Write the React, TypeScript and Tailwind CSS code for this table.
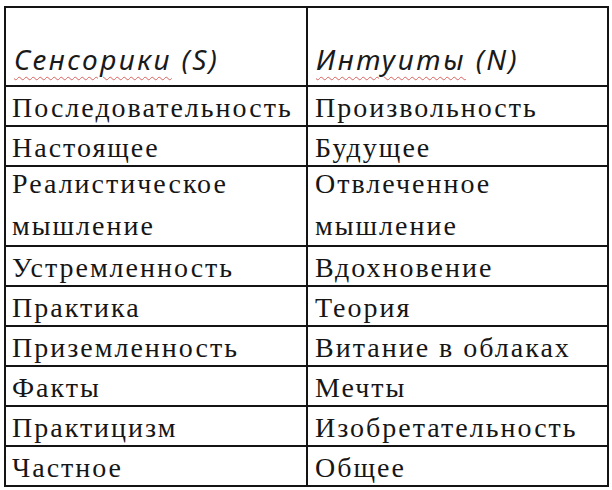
import React from "react";

const rows: [string, string][] = [
  ["Последовательность", "Произвольность"],
  ["Настоящее", "Будущее"],
  ["Реалистическое\nмышление", "Отвлеченное\nмышление"],
  ["Устремленность", "Вдохновение"],
  ["Практика", "Теория"],
  ["Приземленность", "Витание в облаках"],
  ["Факты", "Мечты"],
  ["Практицизм", "Изобретательность"],
  ["Частное", "Общее"],
];

function Cell({ text, left }: { text: string; left: boolean }) {
  const two = text.includes("\n");
  const lines = text.split("\n");
  if (two) {
    return (
      <div className={left ? "h-[80px] border-r-2 border-b-2 border-[#141414] pl-[6px]" : "h-[80px] border-r-2 border-b-2 border-[#141414] pl-[7px]"}>
        <div className="-mt-[4px] leading-[42px]">
          {lines.map((l, i) => (
            <div key={i} className="whitespace-nowrap">
              {l}
            </div>
          ))}
        </div>
      </div>
    );
  }
  return (
    <div className={left ? "h-[40px] border-r-2 border-b-2 border-[#141414] pt-[1px] pl-[6px] leading-[40px] whitespace-nowrap" : "h-[40px] border-r-2 border-b-2 border-[#141414] pt-[1px] pl-[7px] leading-[40px] whitespace-nowrap"}>
      {text}
    </div>
  );
}

function Head({ word, letter }: { word: string; letter: string }) {
  return (
    <div className="h-[79px] border-r-2 border-b-2 border-[#141414] pt-[35px] pl-[8px] font-['Noto_Sans'] text-[28px] italic leading-[32px] tracking-[2.5px] text-[#1a1a1a] whitespace-nowrap">
      <span className="underline decoration-wavy decoration-[#d9625e] decoration-1 underline-offset-[6px]">
        {word}
      </span>{" "}
      {letter}
    </div>
  );
}

export default function App() {
  return (
    <div className="w-[612px] h-[490px] bg-white pt-[6px] pl-[4px]">
      <div className="inline-grid grid-cols-[302px_301px] border-t-2 border-l-2 border-[#141414] font-['Liberation_Serif'] text-[28px] tracking-[2px] text-[#161616]">
        <Head word="Сенсорики" letter="(S)" />
        <Head word="Интуиты" letter="(N)" />
        {rows.map(([a, b], i) => (
          <React.Fragment key={i}>
            <Cell text={a} left />
            <Cell text={b} left={false} />
          </React.Fragment>
        ))}
      </div>
    </div>
  );
}
